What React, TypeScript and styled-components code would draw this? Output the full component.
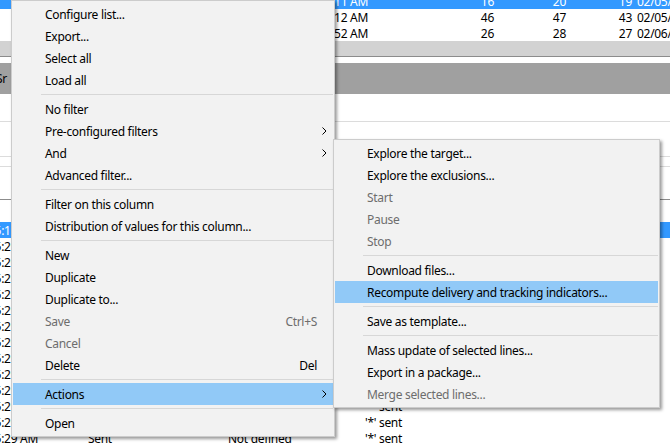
import React from 'react';
import styled, { createGlobalStyle } from 'styled-components';

const FONT = `"Noto Sans", "Segoe UI", sans-serif`;

const GlobalStyle = createGlobalStyle`
  html, body { margin: 0; padding: 0; background: #fff; }
  body { font-family: ${FONT}; font-size: 12px; letter-spacing: -0.3px; color: #000; }
`;

const Page = styled.div`
  position: relative;
  width: 670px;
  height: 446px;
  overflow: hidden;
  background: #fff;
`;

const Background = styled.div`
  display: flex;
  flex-direction: column;
`;

const TopGrid = styled.div`
  display: flex;
  flex-direction: column;
  margin-top: -7px;
`;

const GridRow = styled.div<{ $selected?: boolean }>`
  display: flex;
  height: 16px;
  align-items: center;
  white-space: nowrap;
  background: ${(p) => (p.$selected ? '#3399ff' : '#fff')};
  color: ${(p) => (p.$selected ? '#fff' : '#000')};
`;

const Cell = styled.div<{ $w?: number; $right?: boolean; $padL?: number }>`
  flex: ${(p) => (p.$w ? `0 0 ${p.$w}px` : '1 1 auto')};
  display: flex;
  justify-content: ${(p) => (p.$right ? 'flex-end' : 'flex-start')};
  padding: 0 4px 0 ${(p) => (p.$padL ?? 4)}px;
  box-sizing: border-box;
  overflow: hidden;
`;

const ScrollBand = styled.div`
  height: 15px;
  background: #d2d2d2;
  border-bottom: 1px solid #8c8c8c;
`;

const Gap = styled.div<{ $h: number }>`
  height: ${(p) => p.$h}px;
`;

const TabBand = styled.div`
  height: 31px;
  background: #a0a0a0;
  display: flex;
  align-items: center;
  margin-left: -4px;
  color: #000;
`;

const FilterArea = styled.div`
  height: 105px;
  display: flex;
  flex-direction: column;
  border-bottom: 1px solid #8c8c8c;
`;

const Rule = styled.div<{ $top: number }>`
  margin-top: ${(p) => p.$top}px;
  height: 1px;
  background: #dcdcdc;
`;

const GridHeader = styled.div`
  height: 22px;
  background: #fff;
`;

const BottomGrid = styled.div`
  display: flex;
  flex-direction: column;
`;

const Menu = styled.div<{ $left: number; $top: number; $width: number }>`
  position: absolute;
  left: ${(p) => p.$left}px;
  top: ${(p) => p.$top}px;
  width: ${(p) => p.$width}px;
  box-sizing: border-box;
  background: #f2f2f2;
  border: 1px solid #cccccc;
  padding: 2px 1px;
  box-shadow: 2px 2px 3px rgba(0, 0, 0, 0.4);
  display: flex;
  flex-direction: column;
`;

const Item = styled.div<{ $active?: boolean; $disabled?: boolean }>`
  display: flex;
  align-items: center;
  height: 22px;
  padding-left: 32px;
  background: ${(p) => (p.$active ? '#91c9f7' : 'transparent')};
  color: ${(p) => (p.$disabled ? '#6d6d6d' : '#000')};
  white-space: nowrap;
`;

const Label = styled.span`
  flex: 1 1 auto;
`;

const Shortcut = styled.span`
  flex: 0 0 auto;
`;

const ArrowCell = styled.span`
  flex: 0 0 16px;
  display: flex;
  align-items: center;
  padding-left: 5px;
  box-sizing: border-box;
`;

const Separator = styled.div`
  height: 7px;
  display: flex;
  align-items: center;
  padding-left: 28px;
  &::after {
    content: '';
    flex: 1;
    height: 1px;
    background: #d7d7d7;
  }
`;

const Chevron = () => (
  <svg width="5" height="8" viewBox="0 0 5 8">
    <path d="M0.5 0.5 L4 4 L0.5 7.5" fill="none" stroke="#000" strokeWidth="1" />
  </svg>
);

type Entry =
  | { sep: true }
  | { label: string; disabled?: boolean; active?: boolean; shortcut?: string; sub?: boolean };

const mainItems: Entry[] = [
  { label: 'Configure list...' },
  { label: 'Export...' },
  { label: 'Select all' },
  { label: 'Load all' },
  { sep: true },
  { label: 'No filter' },
  { label: 'Pre-configured filters', sub: true },
  { label: 'And', sub: true },
  { label: 'Advanced filter...' },
  { sep: true },
  { label: 'Filter on this column' },
  { label: 'Distribution of values for this column...' },
  { sep: true },
  { label: 'New' },
  { label: 'Duplicate' },
  { label: 'Duplicate to...' },
  { label: 'Save', disabled: true, shortcut: 'Ctrl+S' },
  { label: 'Cancel', disabled: true },
  { label: 'Delete', shortcut: 'Del' },
  { sep: true },
  { label: 'Actions', active: true, sub: true },
  { sep: true },
  { label: 'Open' },
];

const subItems: Entry[] = [
  { label: 'Explore the target...' },
  { label: 'Explore the exclusions...' },
  { label: 'Start', disabled: true },
  { label: 'Pause', disabled: true },
  { label: 'Stop', disabled: true },
  { sep: true },
  { label: 'Download files...' },
  { label: 'Recompute delivery and tracking indicators...', active: true },
  { sep: true },
  { label: 'Save as template...' },
  { sep: true },
  { label: 'Mass update of selected lines...' },
  { label: 'Export in a package...' },
  { label: 'Merge selected lines...', disabled: true },
];

const MenuList = ({ items }: { items: Entry[] }) => (
  <>
    {items.map((it, i) =>
      'sep' in it ? (
        <Separator key={i} />
      ) : (
        <Item key={i} $active={it.active} $disabled={it.disabled}>
          <Label>{it.label}</Label>
          {it.shortcut && <Shortcut>{it.shortcut}</Shortcut>}
          <ArrowCell>{it.sub && <Chevron />}</ArrowCell>
        </Item>
      )
    )}
  </>
);

const topRows = [
  { t: '02/05/2019 10:42:11 AM', a: '16', b: '20', c: '19', d: '02/05/2019 10:45:00 AM', sel: true },
  { t: '02/05/2019 09:31:12 AM', a: '46', b: '47', c: '43', d: '02/05/2019 09:35:00 AM' },
  { t: '02/06/2019 08:14:52 AM', a: '26', b: '28', c: '27', d: '02/06/2019 08:20:00 AM' },
];

const bottomRows = Array.from({ length: 14 }, (_, i) => ({
  t: i === 0 ? '02/04/2019 11:25:19 AM' : '02/04/2019 11:25:29 AM',
  sel: i === 0,
}));

export default function App() {
  return (
    <Page>
      <GlobalStyle />
      <Background>
        <TopGrid>
          {topRows.map((r, i) => (
            <GridRow key={i} $selected={r.sel}>
              <Cell $w={372} $right>{r.t}</Cell>
              <Cell $w={126} $right>{r.a}</Cell>
              <Cell $w={72} $right>{r.b}</Cell>
              <Cell $w={66} $right>{r.c}</Cell>
              <Cell $padL={1}>{r.d}</Cell>
            </GridRow>
          ))}
        </TopGrid>
        <ScrollBand />
        <Gap $h={6} />
        <TabBand>Sr</TabBand>
        <FilterArea>
          <Rule $top={27} />
          <Rule $top={34} />
          <Rule $top={9} />
        </FilterArea>
        <GridHeader />
        <BottomGrid>
          {bottomRows.map((r, i) => (
            <GridRow key={i} $selected={r.sel}>
              <Cell $w={42} $right>{r.t}</Cell>
              <Cell $w={42} />
              <Cell $w={140}>Sent</Cell>
              <Cell $w={137}>Not defined</Cell>
              <Cell>'*' sent</Cell>
            </GridRow>
          ))}
        </BottomGrid>
      </Background>
      <Menu $left={11} $top={0} $width={324}>
        <MenuList items={mainItems} />
      </Menu>
      <Menu $left={333} $top={139} $width={327}>
        <MenuList items={subItems} />
      </Menu>
    </Page>
  );
}
